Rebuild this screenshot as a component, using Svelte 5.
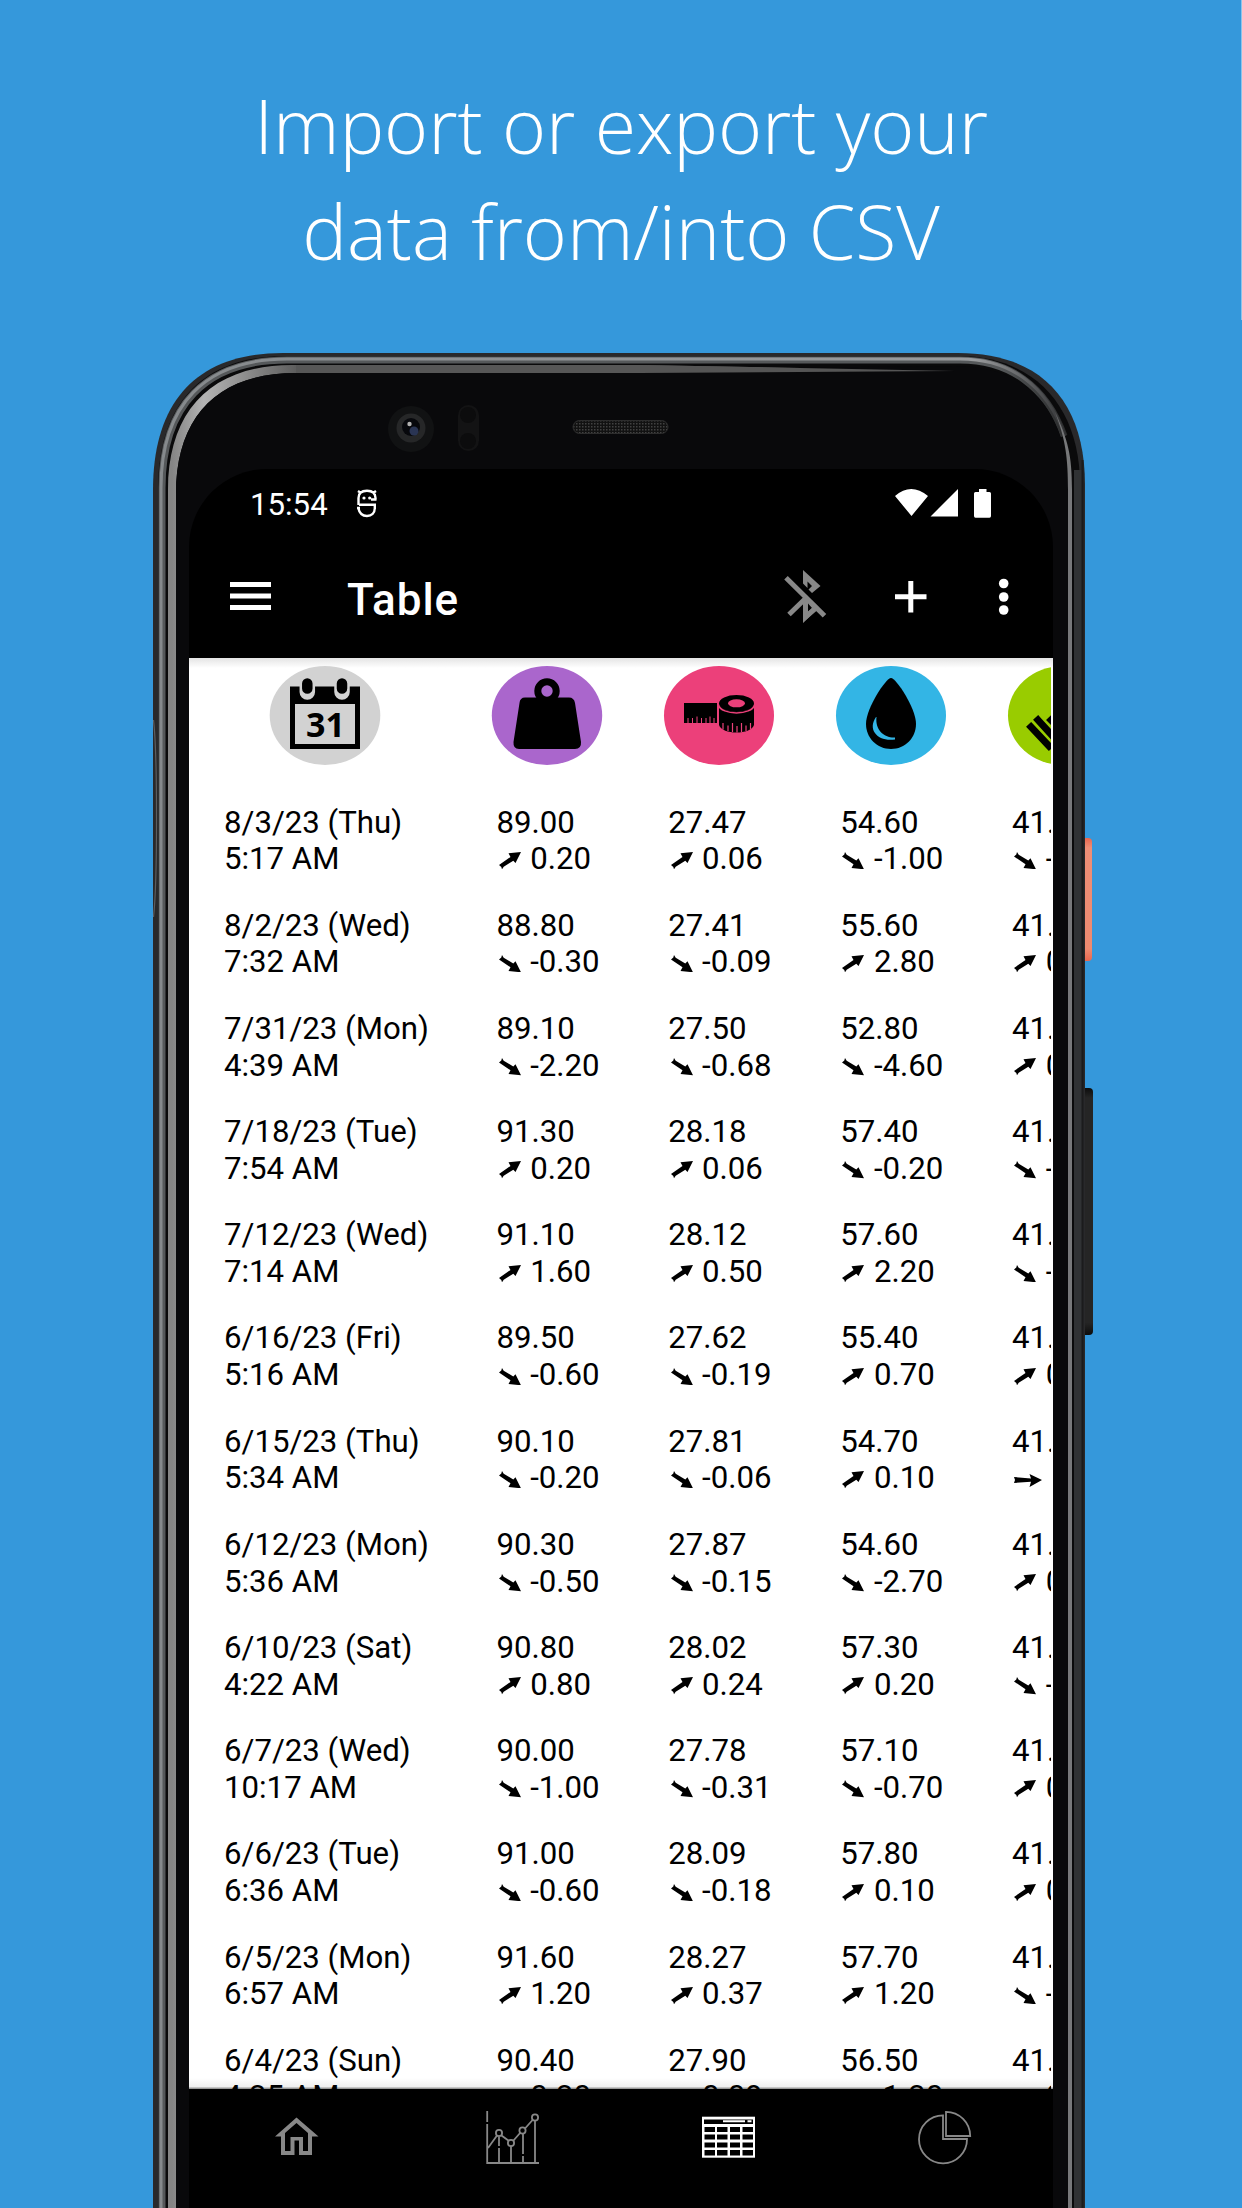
<script>
  const rows = [
    ['8/3/23 (Thu)', '5:17 AM', '89.00', 'u0.20', '27.47', 'u0.06', '54.60', 'd-1.00', '41.80', 'd-0.30'],
    ['8/2/23 (Wed)', '7:32 AM', '88.80', 'd-0.30', '27.41', 'd-0.09', '55.60', 'u2.80', '41.90', 'u0.20'],
    ['7/31/23 (Mon)', '4:39 AM', '89.10', 'd-2.20', '27.50', 'd-0.68', '52.80', 'd-4.60', '41.70', 'u0.10'],
    ['7/18/23 (Tue)', '7:54 AM', '91.30', 'u0.20', '28.18', 'u0.06', '57.40', 'd-0.20', '41.60', 'd-0.20'],
    ['7/12/23 (Wed)', '7:14 AM', '91.10', 'u1.60', '28.12', 'u0.50', '57.60', 'u2.20', '41.80', 'd-0.10'],
    ['6/16/23 (Fri)', '5:16 AM', '89.50', 'd-0.60', '27.62', 'd-0.19', '55.40', 'u0.70', '41.90', 'u0.20'],
    ['6/15/23 (Thu)', '5:34 AM', '90.10', 'd-0.20', '27.81', 'd-0.06', '54.70', 'u0.10', '41.70', 'f0.00'],
    ['6/12/23 (Mon)', '5:36 AM', '90.30', 'd-0.50', '27.87', 'd-0.15', '54.60', 'd-2.70', '41.70', 'u0.10'],
    ['6/10/23 (Sat)', '4:22 AM', '90.80', 'u0.80', '28.02', 'u0.24', '57.30', 'u0.20', '41.60', 'd-0.20'],
    ['6/7/23 (Wed)', '10:17 AM', '90.00', 'd-1.00', '27.78', 'd-0.31', '57.10', 'd-0.70', '41.80', 'u0.10'],
    ['6/6/23 (Tue)', '6:36 AM', '91.00', 'd-0.60', '28.09', 'd-0.18', '57.80', 'u0.10', '41.70', 'u0.10'],
    ['6/5/23 (Mon)', '6:57 AM', '91.60', 'u1.20', '28.27', 'u0.37', '57.70', 'u1.20', '41.60', 'd-0.10'],
    ['6/4/23 (Sun)', '4:35 AM', '90.40', 'u0.30', '27.90', 'u0.09', '56.50', 'd-1.30', '41.70', 'u0.10'],
  ].map((r) => ({
    date: r[0],
    time: r[1],
    cells: [2, 4, 6, 8].map((i) => ({ value: r[i], dir: r[i + 1][0], delta: r[i + 1].slice(1) })),
  }));
</script>

<div class="page">
  <i class="edge"></i>
  <h1>Import or export your<br />data from/into CSV</h1>

  <div class="phone">
    <i class="side power"></i>
    <i class="side volume"></i>
    <svg class="shell" viewBox="153 353 932 1855" width="932" height="1855">
      <defs>
        <linearGradient id="rim" x1="900" x2="1066" y1="0" y2="0" gradientUnits="userSpaceOnUse">
          <stop offset="0" stop-color="#55585a" /><stop offset=".6" stop-color="#55585a" /><stop offset="1" stop-color="#2a2b2c" />
        </linearGradient>
        <linearGradient id="shine" x1="153" x2="1066" y1="0" y2="0" gradientUnits="userSpaceOnUse">
          <stop offset="0" stop-color="#85898c" /><stop offset=".9" stop-color="#999b9d" /><stop offset="1" stop-color="#333436" />
        </linearGradient>
        <linearGradient id="glow" x1="172" x2="300" y1="0" y2="0" gradientUnits="userSpaceOnUse">
          <stop offset="0" stop-color="#858585" /><stop offset=".25" stop-color="#b4b4b4" /><stop offset="1" stop-color="#5a5a5a" />
        </linearGradient>
        <pattern id="mesh" width="3" height="3" patternUnits="userSpaceOnUse">
          <rect width="3" height="3" fill="#121212" /><rect width="1.5" height="1.5" fill="#414141" />
        </pattern>
      </defs>
      <path d="M153 2300V490C153 400 198 353 283 353H958C1040 353 1085 400 1085 485V2300Z" fill="#29292b" />
      <path d="M158 2300V490C158 404 202 356 285 356H958C1036 356 1080 408 1080 485V2300Z" fill="#0a0a0b" />
      <path d="M162 2300V488C162 406 205 360 287 360H960C1009 360 1046 386 1064 436" fill="none" stroke="url(#rim)" stroke-width="7" />
      <path d="M161 2300V488C161 405 205 359 287 359H960C1009 359 1046 384 1065 436" fill="none" stroke="url(#shine)" stroke-width="3" />
      <path d="M168 2300V490C168 410 212 365 292 365H640L955 371L640 373H296C218 373 176 416 176 494V2300Z" fill="url(#glow)" />
      <path d="M176 2300V494C176 416 218 373 296 373L955 366C1030 366 1068 412 1068 490V2300Z" fill="#09090b" />
      <path d="M640 365L955 371L640 373Z" fill="#555" />
      <path d="M296 365H640V373H296Z" fill="#575757" />
      <path d="M1055 412C1068 440 1072 455 1072 490V2300H1068V490C1068 460 1066 440 1055 412Z" fill="#77787a" />
      <path d="M1078 470V2300" stroke="#303234" stroke-width="8" />
      <path d="M1082.500 460V2300" stroke="#1b1b1c" stroke-width="2" />
      <path d="M153.500 720Q156.500 745 156.500 818T153.500 917" fill="none" stroke="#5c5e60" stroke-width="1.200" />
      <circle cx="411" cy="429" r="23" fill="#111213" />
      <circle cx="411" cy="428" r="14.500" fill="#262728" />
      <circle cx="411" cy="427" r="9" fill="#07080c" />
      <circle cx="414" cy="431" r="4.500" fill="#2a3554" />
      <circle cx="409.500" cy="424" r="2.200" fill="#b0b0b0" />
      <rect x="458" y="405" width="21" height="46" rx="10.500" fill="#131314" />
      <circle cx="468" cy="415" r="8" fill="#0c0c0d" /><circle cx="468" cy="441" r="8" fill="#0c0c0d" />
      <rect x="573" y="420.500" width="95" height="13" rx="6.500" fill="url(#mesh)" stroke="#2d2d2d" />
    </svg>

    <div class="screen">
      <div class="status">
        <span class="clock">15:54</span>
        <svg class="face" viewBox="0 0 22 30" width="22" height="30">
          <path d="M3 16.800H18.800V20C18.800 25 15.500 28 11 28S3.300 25 2.300 20M2.500 17V10C2.500 5 5.500 2.700 11 2.700S19.500 5 19.500 10V11.500M20.500 11.500H15M2 3L5 5M20 3L17 5M1 20H4" fill="none" stroke="#fff" stroke-width="2.400" />
          <circle cx="8" cy="10" r="1.600" fill="#fff" /><circle cx="13.700" cy="10" r="1.600" fill="#fff" />
        </svg>
        <svg class="signals" viewBox="895 488 98 31" width="98" height="31">
          <path d="M895 496Q911 482 928 496L911.500 516ZM958 489V516.500H930.500ZM979 489H986.500V492H989.500Q991 492 991 493.500V516Q991 517.700 989.500 517.700H975.500Q974 517.700 974 516V493.500Q974 492 975.500 492H979Z" fill="#fff" />
        </svg>
      </div>
      <div class="bar">
        <svg class="burger" viewBox="0 0 42 30" width="42" height="30"><path d="M0 3.500H41M0 15H41M0 26.500H41" stroke="#fff" stroke-width="5" /></svg>
        <h2>Table</h2>
        <svg class="actions" viewBox="784 568 226 58" width="226" height="58">
          <path d="M786 577.800L824.500 615.800M806 598L789 614.500M805.500 598V617L816.500 607.500" fill="none" stroke="#888" stroke-width="5" />
          <path d="M803 570L820.500 586L812 593L808.500 589.500L812 586L807.500 581.500V588L803 583.500ZM803 600H807.500V612.500L812 608L808 603.500L811.500 600L819 607.500L803 623Z" fill="#888" />
          <path d="M895 596.800H926.500M910.800 581V612.500" stroke="#fff" stroke-width="5" />
          <circle cx="1003.700" cy="583.500" r="4.800" fill="#fff" /><circle cx="1003.700" cy="597" r="4.800" fill="#fff" /><circle cx="1003.700" cy="610" r="4.800" fill="#fff" />
        </svg>
      </div>

      <div class="table">
        <div class="row head">
          <svg class="badge center" viewBox="270 666 110 99" width="110" height="99">
            <ellipse cx="325" cy="715.500" rx="55.300" ry="49.500" fill="#d2d2d2" />
            <path d="M290 686.500H360V749H290ZM295 704V744H355V704Z" fill="#000" fill-rule="evenodd" />
            <path d="M307.300 680V692M342 680V692" stroke="#d2d2d2" stroke-width="15.500" stroke-linecap="round" />
            <path d="M307.300 683.500V688.500M342 683.500V688.500" stroke="#000" stroke-width="10.500" stroke-linecap="round" />
            <text class="day" x="325.500" y="736.500" text-anchor="middle">31</text>
          </svg>
          <svg class="badge" viewBox="492 666 110 99" width="110" height="99">
            <ellipse cx="547" cy="715.500" rx="55.200" ry="49.500" fill="#aa66cc" />
            <circle cx="547" cy="691" r="9.200" fill="none" stroke="#000" stroke-width="7" />
            <path d="M525 697.500H569Q574 697.500 575 703L581 742Q581.500 749 575 749H519Q513 749 513.500 742L519.500 703Q520 697.500 525 697.500Z" />
          </svg>
          <svg class="badge" viewBox="664 666 110 99" width="110" height="99">
            <ellipse cx="719" cy="715.500" rx="55" ry="49.500" fill="#ec407a" />
            <path d="M684 703H717V723H684Z" />
            <path d="M688 724V718M692.500 724V718M697 724V716.500M701.500 724V718M706 724V718M710 724V716.500M714 724V718" stroke="#ec407a" stroke-width="1" />
            <path d="M719 704C722 714 751 714 754 704V725C751 735 722 735 719 725Z" />
            <path d="M723 729.500V723M728 731V725.500M732.500 732V723M737 732.500V726M741.500 732V723M746 731V725.500M750.500 729V723" stroke="#ec407a" stroke-width="1.200" />
            <ellipse cx="736.500" cy="703.500" rx="17.500" ry="8.500" /><ellipse cx="736.500" cy="703.300" rx="8.500" ry="4" fill="#ec407a" />
            <path d="M718.500 705C721 715.500 752 715.500 754.500 705" fill="none" stroke="#ec407a" stroke-width="1.500" />
          </svg>
          <svg class="badge" viewBox="836 666 110 99" width="110" height="99">
            <ellipse cx="891" cy="715.500" rx="55" ry="49.500" fill="#33b5e5" />
            <path d="M891 678C896 678 916 708 916 724C916 738 905 749 891 749S866 738 866 724C866 708 886 678 891 678Z" />
            <path d="M876 717C867 730 878 742 895 739.500V737.500C884 738 875 730 876.500 717Z" fill="#33b5e5" />
          </svg>
          <svg class="badge" viewBox="1007 666 110 99" width="110" height="99">
            <ellipse cx="1062" cy="715.500" rx="55" ry="49.500" fill="#99cc00" />
            <path d="M1030 727L1048 746M1037 720L1058 743M1050 720L1072 743" stroke="#000" stroke-width="7" stroke-linecap="square" stroke-linejoin="round" />
          </svg>
        </div>
        {#each rows as row}
          <div class="row data">
            <div>{row.date}<br />{row.time}</div>
            {#each row.cells as c}
              <div>
                {c.value}
                <span class="delta">
                  {#if c.dir === 'f'}
                    <svg viewBox="0 0 28 17" width="28" height="17">
                      <path d="M0 6L17 7.500L15.500 3L28 9L15.500 16L17 10.800L0 12L1 9Z" />
                    </svg>
                  {:else}
                    <svg viewBox="0 0 22 17.500" width="22" height="17.500">
                      {#if c.dir === 'u'}
                        <path d="M0 13L11.500 5L9.500 1.300L22 0L16.500 11L14.300 8.800L4.700 14.800L3 17.300L2.300 15Z" />
                      {:else}
                        <path d="M3 0L4.700 2.700L14.300 8.500L16.500 6.300L22 17.300L9.500 16L11.500 12.300L0 4.500L2.300 2.500Z" />
                      {/if}
                    </svg>
                  {/if}{c.delta}
                </span>
              </div>
            {/each}
          </div>
        {/each}
      </div>

      <svg class="nav" viewBox="189 2088 864 120" width="864" height="120">
        <path d="M275 2136.500L296.500 2117.500L318.500 2136.500H312V2155H299V2140.500H294.500V2155H281V2136.500ZM285 2133V2151H290.500V2137H303V2151H308V2133L296.500 2123Z" fill="#888" fill-rule="evenodd" />
        <g fill="none" stroke="#888" stroke-width="1.800">
          <path d="M487.200 2111V2122M487.200 2124V2163H539M488 2148L497 2135.500M501.500 2135.500L509 2141M513.500 2140.500L520.500 2132.500M525 2128.500L533 2119.500M499 2137V2146M499 2148V2163M511 2146V2163M523 2134V2154M523 2156V2163M535 2121V2163" />
          <circle cx="499" cy="2133" r="3.100" /><circle cx="511" cy="2143" r="3.100" /><circle cx="522.500" cy="2130.500" r="3.100" /><circle cx="535" cy="2117.500" r="3.100" />
          <path d="M943 2115.300A24 24 0 1 0 967 2139H943ZM946 2111.800V2136H970.200A24.200 24.200 0 0 0 946 2111.800Z" />
        </g>
        <rect x="702" y="2116.700" width="53" height="41" fill="#fff" />
        <path d="M704 2119.500H753V2124H704ZM704.500 2127H715V2132H704.500ZM717 2127H727.500V2132H717ZM730 2127H740V2132H730ZM742.500 2127H753V2132H742.500ZM704.500 2134.500H715V2139.500H704.500ZM717 2134.500H727.500V2139.500H717ZM730 2134.500H740V2139.500H730ZM742.500 2134.500H753V2139.500H742.500ZM704.500 2142.500H715V2147.500H704.500ZM717 2142.500H727.500V2147.500H717ZM730 2142.500H740V2147.500H730ZM742.500 2142.500H753V2147.500H742.500ZM704.500 2150H715V2155.500H704.500ZM717 2150H727.500V2155.500H717ZM730 2150H740V2155.500H730ZM742.500 2150H753V2155.500H742.500Z" />
        <path d="M723 2121.300H745M747.500 2121.300H751.500" stroke="#fff" stroke-width="2" />
      </svg>
    </div>
  </div>
</div>

<style>
  :global(body) { background: #3598db; }
  .page {
    position: relative;
    width: 1242px;
    height: 2208px;
    overflow: hidden;
    background: #3598db;
    display: flex;
    flex-direction: column;
    align-items: flex-start;
  }
  .edge { position: absolute; top: 0; right: 0; width: 1px; height: 320px; background: #8cc4eb; }
  h1 {
    box-sizing: border-box;
    width: 1242px;
    height: 353px;
    margin: 0;
    padding-top: 72px;
    text-align: center;
    color: #fff;
    font: 300 75.300px/106px 'Open Sans', sans-serif;
    letter-spacing: -0.100px;
    white-space: nowrap;
  }
  .phone {
    position: relative;
    box-sizing: border-box;
    width: 932px;
    height: 1855px;
    flex: none;
    margin-left: 153px;
    padding: 116px 32px 0 36px;
  }
  .shell { position: absolute; inset: 0; }
  .side { position: absolute; left: 928px; border-radius: 0 4px 4px 0; }
  .power { top: 485px; width: 11px; height: 123px; background: linear-gradient(#e8674f, #ee8e76 8%, #ee8a70 90%, #e8674f); }
  .volume { top: 735px; width: 12px; height: 247px; background: linear-gradient(#0c0c0c, #252525 4%, #252525 95%, #0c0c0c); }
  .screen {
    position: relative;
    width: 864px;
    height: 1739px;
    overflow: hidden;
    display: flex;
    flex-direction: column;
    background: #000;
    border-radius: 78px 78px 0 0;
    font-family: Roboto, sans-serif;
  }
  .status {
    box-sizing: border-box;
    height: 70px;
    flex: none;
    padding: 19px 60px 0 61px;
    display: flex;
    align-items: flex-start;
    color: #fff;
  }
  .clock { font-size: 31.200px; line-height: 34px; width: 106px; }
  .signals { margin-left: auto; }
  .bar {
    height: 119px;
    flex: none;
    padding: 0 43px 0 41px;
    display: flex;
    align-items: center;
  }
  .burger { margin-bottom: 6px; }
  h2 {
    margin: 2px 0 0 75px;
    color: #fff;
    font-size: 44px;
    font-weight: 500;
    letter-spacing: 1px;
  }
  .actions { margin: 0 0 3px auto; }
  .table {
    height: 1431px;
    overflow: hidden;
    background: linear-gradient(#e4e4e4, #fff 10px, #fff 1420px, #eee 1429px, #999 1430px);
    flex: none;
  }
  .row {
    display: grid;
    grid-template-columns: 210px repeat(4, 110px);
    column-gap: 61.900px;
    margin: 0 2px 0 31px;
    overflow: hidden;
  }
  .head { height: 146.500px; padding-top: 8px; box-sizing: border-box; }
  .badge { display: block; overflow: visible; }
  .center { justify-self: center; }
  .day { font: 700 34px 'Noto Sans', sans-serif; }
  .data {
    height: 103.200px;
    font-size: 31.200px;
    line-height: 36.700px;
    color: #000;
    white-space: nowrap;
  }
  .data > div { padding-left: 4.500px; }
  .data > div:first-child { padding-left: 4px; }
  .delta { display: flex; align-items: center; }
  .delta svg { margin: 2px 9.500px 0 2.300px; flex: none; }
  .nav { display: block; flex: none; margin-top: -1px; }
</style>
